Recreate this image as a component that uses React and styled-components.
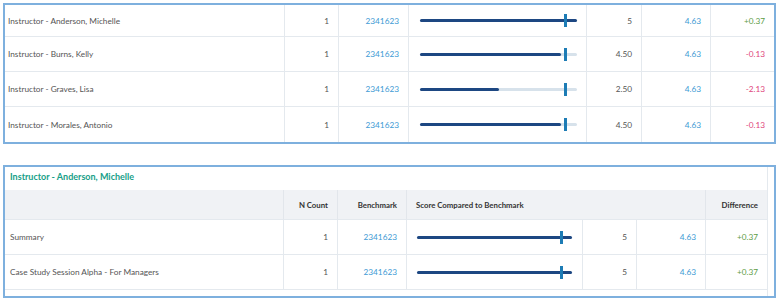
import React from "react";
import styled, { createGlobalStyle } from "styled-components";

const Global = createGlobalStyle`
  html, body { margin: 0; padding: 0; background: #fff; }
  body { font-family: Lato, "Open Sans", sans-serif; }
`;

const Page = styled.div`
  padding: 3px 4px 0 3px;
  display: flex;
  flex-direction: column;
  gap: 21px;
`;

const Panel = styled.div`
  border: 2px solid #7eb0de;
  width: 769px;
  display: flex;
`;

const Inner = styled.div`
  width: ${(p) => p.$width}px;
  border-right: ${(p) => (p.$gutter ? "1px solid #e4e9ee" : "none")};
  padding-bottom: ${(p) => (p.$gutter ? 6 : 0)}px;
`;

const Title = styled.div`
  height: 23px;
  box-sizing: border-box;
  padding: 4px 0 0 5px;
  line-height: 11px;
  font-size: 9px;
  font-weight: 700;
  color: #17a088;
`;

const Grid = styled.div`
  display: grid;
  grid-template-columns: ${(p) => p.$cols};
  grid-template-rows: ${(p) => p.$rows};
`;

const Cell = styled.div`
  display: flex;
  align-items: center;
  justify-content: ${(p) => (p.$align === "right" ? "flex-end" : "flex-start")};
  padding: ${(p) => (p.$align === "right" ? "0 9px 0 0" : `0 0 0 ${p.$pl ?? 3}px`)};
  font-size: 8.25px;
  color: ${(p) => p.$color || "#555"};
  border-bottom: ${(p) => (p.$noBottom ? "none" : "1px solid #e4e9ee")};
  border-right: ${(p) => (p.$last ? "none" : "1px solid #e4e9ee")};
  grid-column: ${(p) => p.$span || "auto"};
  white-space: nowrap;
  overflow: hidden;
`;

const HeadCell = styled(Cell)`
  background: #f0f2f5;
  color: #333;
  font-weight: 700;
  font-size: 7.8px;
  border-bottom: 1px solid #e4e9ee;
  border-right: ${(p) => (p.$last ? "none" : "1px solid #e2e6eb")};
`;

const BarCell = styled.div`
  display: flex;
  align-items: center;
  padding: 0 ${(p) => p.$pr}px 0 ${(p) => p.$pl}px;
  border-bottom: ${(p) => (p.$noBottom ? "none" : "1px solid #e4e9ee")};
  border-right: 1px solid #e4e9ee;
`;

const Track = styled.div`
  position: relative;
  flex: 1;
  height: 3px;
  border-radius: 2px;
  background: #d7e2eb;
`;

const Fill = styled.div`
  height: 100%;
  border-radius: 2px;
  background: #1d4782;
`;

const Marker = styled.div`
  position: absolute;
  top: -5px;
  width: 3px;
  height: 13px;
  margin-left: -1px;
  background: #1d7cb5;
`;

const colorFor = (d) => (d.startsWith("+") ? "#5d9c45" : "#e0457b");

function Bar({ score, bench, pl, pr, noBottom }) {
  return (
    <BarCell $pl={pl} $pr={pr} $noBottom={noBottom}>
      <Track>
        <Fill style={{ width: `${(score / 5) * 100}%` }} />
        <Marker style={{ left: `${(bench / 5) * 100}%` }} />
      </Track>
    </BarCell>
  );
}

const topRows = [
  { name: "Instructor - Anderson, Michelle", score: 5, label: "5", diff: "+0.37" },
  { name: "Instructor - Burns, Kelly", score: 4.5, label: "4.50", diff: "-0.13" },
  { name: "Instructor - Graves, Lisa", score: 2.5, label: "2.50", diff: "-2.13" },
  { name: "Instructor - Morales, Antonio", score: 4.5, label: "4.50", diff: "-0.13" },
];

const bottomRows = [
  { name: "Summary", score: 5, label: "5", diff: "+0.37" },
  { name: "Case Study Session Alpha - For Managers", score: 5, label: "5", diff: "+0.37" },
];

export default function App() {
  return (
    <>
      <Global />
      <Page>
        <Panel>
          <Inner $width={769}>
            <Grid $cols="280px 54px 70px 178px 55px 69px 63px" $rows="32px repeat(3, 35px)">
              {topRows.map((r, i) => {
                const nb = i === topRows.length - 1;
                return (
                  <React.Fragment key={r.name}>
                    <Cell $noBottom={nb}>{r.name}</Cell>
                    <Cell $align="right" $noBottom={nb}>1</Cell>
                    <Cell $align="right" $color="#3d9ad4" $noBottom={nb}>2341623</Cell>
                    <Bar score={r.score} bench={4.63} pl={11} pr={9} noBottom={nb} />
                    <Cell $align="right" $noBottom={nb}>{r.label}</Cell>
                    <Cell $align="right" $color="#3d9ad4" $noBottom={nb}>4.63</Cell>
                    <Cell $align="right" $color={colorFor(r.diff)} $last $noBottom={nb}>{r.diff}</Cell>
                  </React.Fragment>
                );
              })}
            </Grid>
          </Inner>
        </Panel>

        <Panel>
          <Inner $width={762} $gutter>
            <Title>Instructor - Anderson, Michelle</Title>
            <Grid $cols="279px 54px 69px 176px 54px 69px 61px" $rows="30px repeat(2, 35px)">
              <HeadCell />
              <HeadCell $align="right">N Count</HeadCell>
              <HeadCell $align="right">Benchmark</HeadCell>
              <HeadCell $span="span 3" $pl={9}>Score Compared to Benchmark</HeadCell>
              <HeadCell $align="right" $last>Difference</HeadCell>
              {bottomRows.map((r) => (
                <React.Fragment key={r.name}>
                  <Cell $pl={5}>{r.name}</Cell>
                  <Cell $align="right">1</Cell>
                  <Cell $align="right" $color="#3d9ad4">2341623</Cell>
                  <Bar score={r.score} bench={4.63} pl={10} pr={10} />
                  <Cell $align="right">{r.label}</Cell>
                  <Cell $align="right" $color="#3d9ad4">4.63</Cell>
                  <Cell $align="right" $color={colorFor(r.diff)} $last>{r.diff}</Cell>
                </React.Fragment>
              ))}
            </Grid>
          </Inner>
        </Panel>
      </Page>
    </>
  );
}
